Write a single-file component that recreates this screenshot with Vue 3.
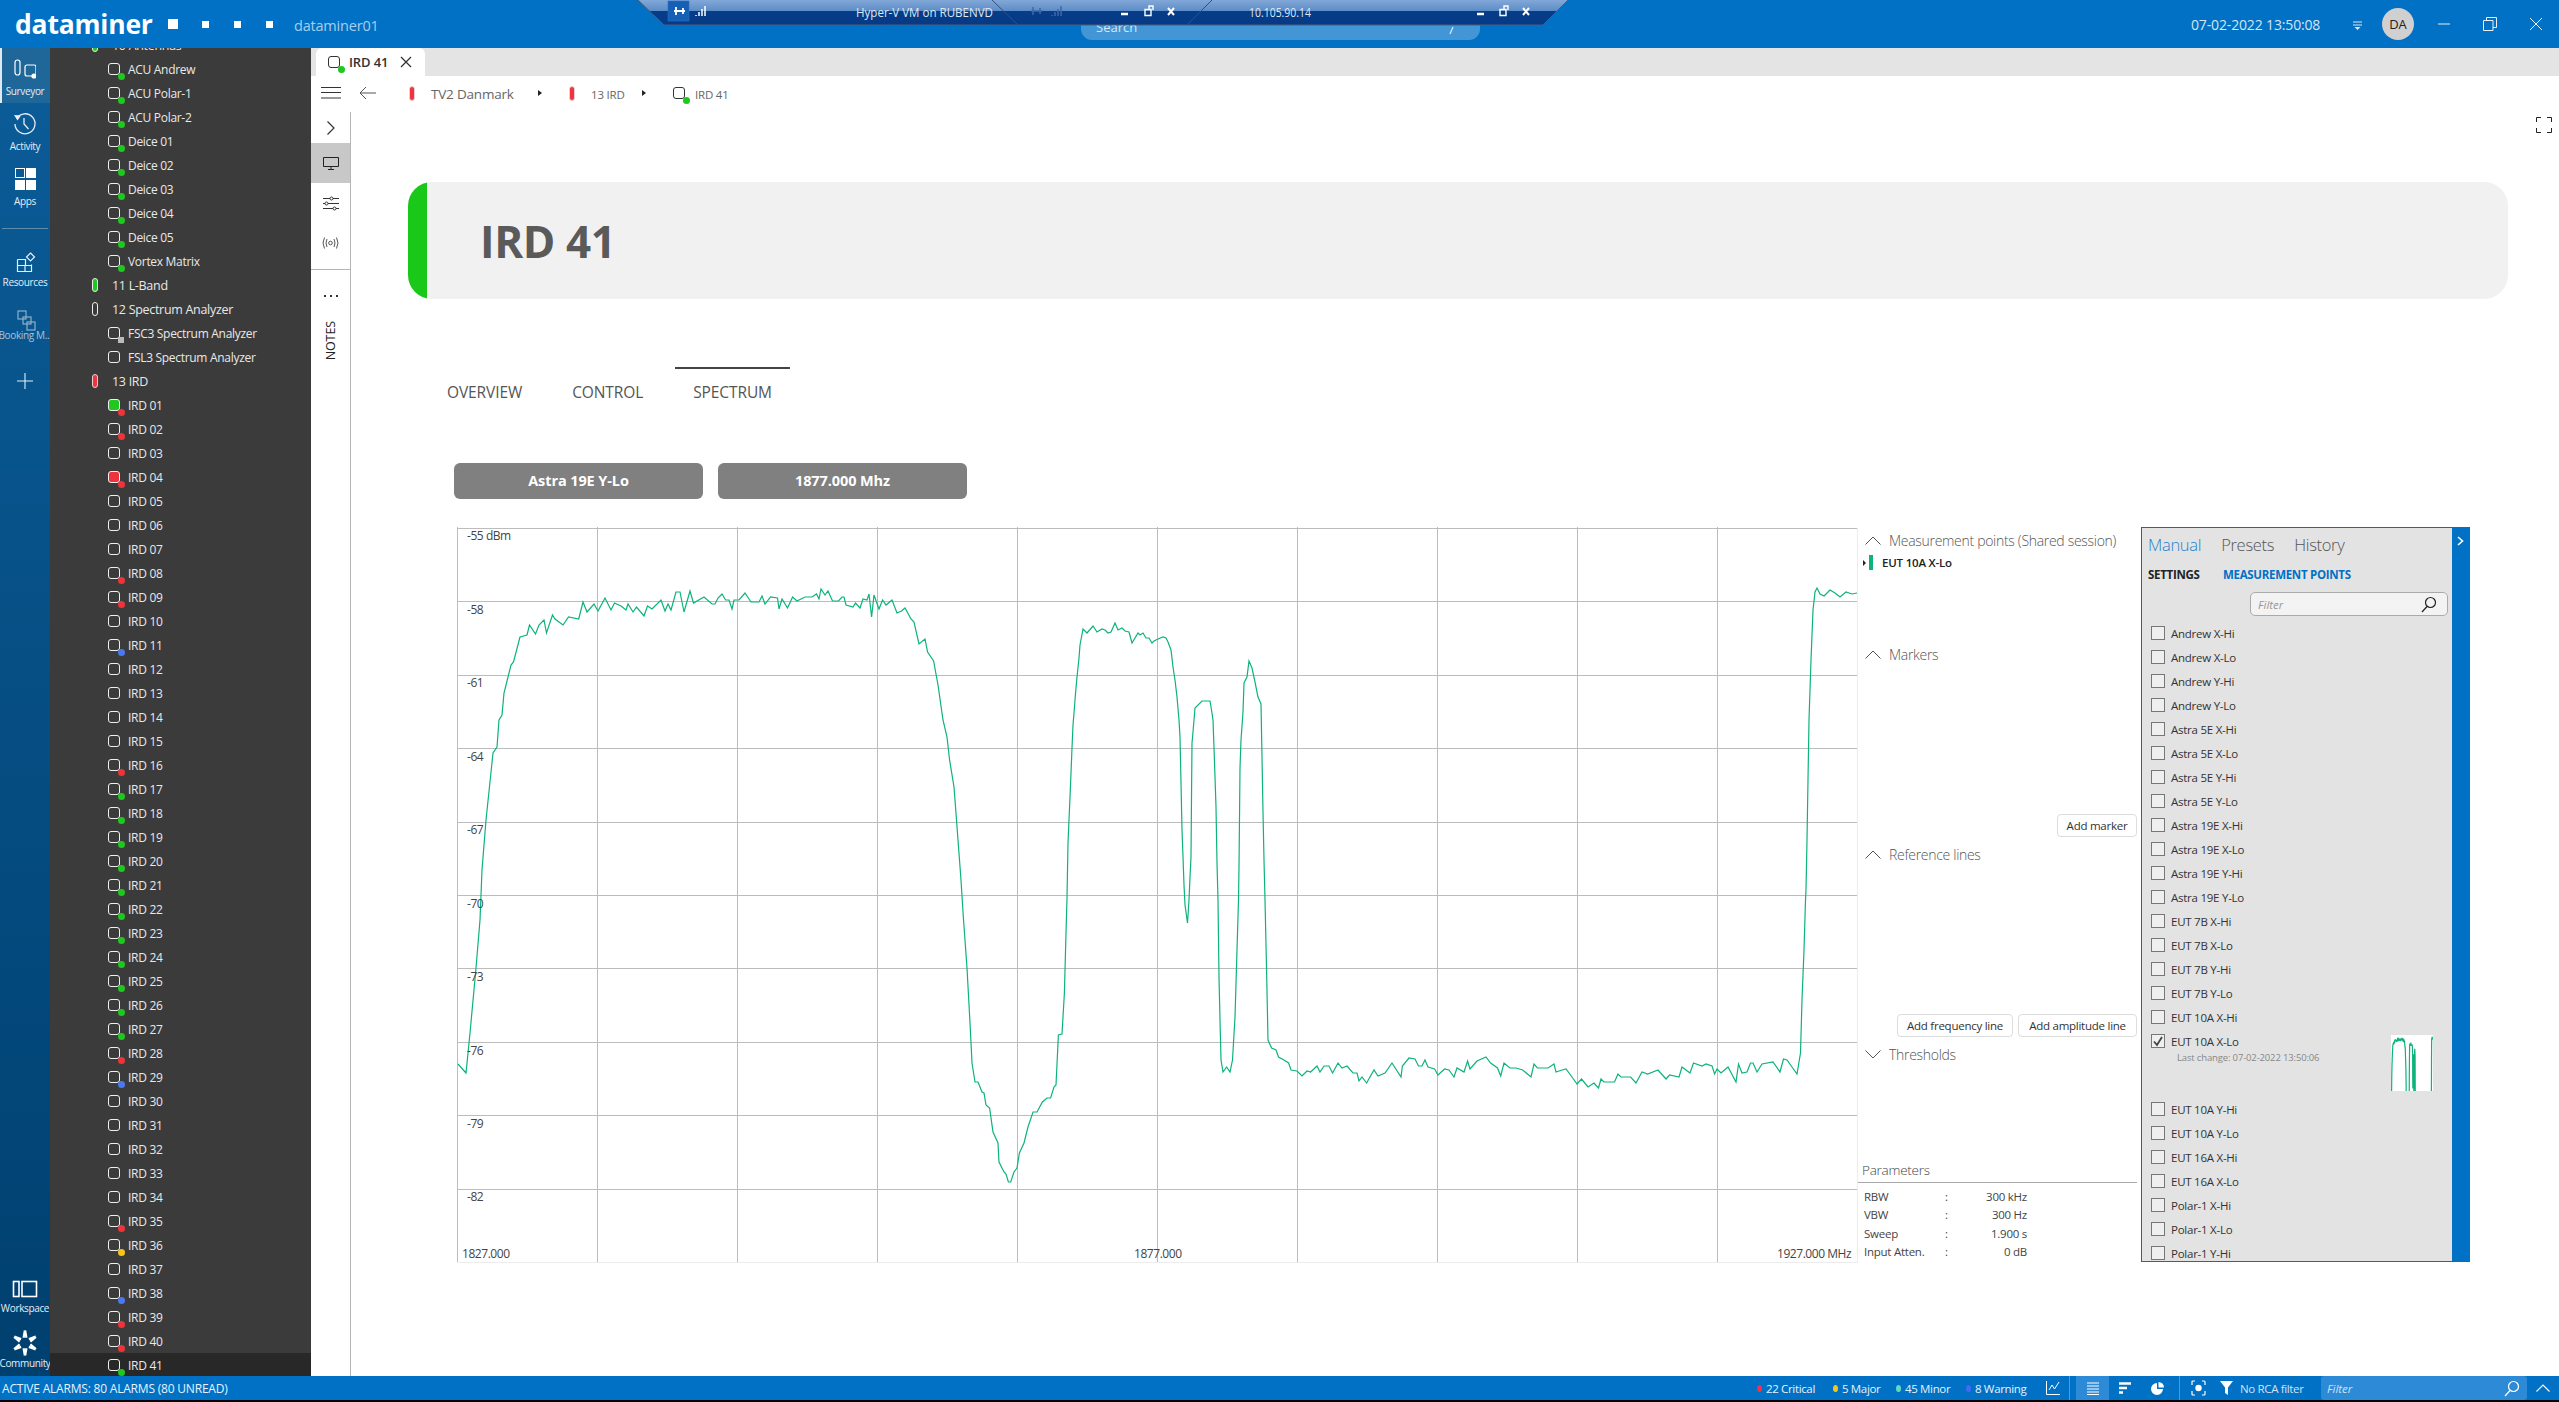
<template>
  <div class="app">
    <header class="top">
      <div class="logo">dataminer</div>
      <span class="sq sq-a"></span><span class="sq sq-b"></span><span class="sq sq-b"></span><span class="sq sq-b"></span>
      <div class="host">dataminer01</div>
      <div class="top-right">
        <div class="date">07-02-2022 13:50:08</div>
        <svg class="drop" width="12" height="12" viewBox="0 0 12 12"><path d="M1 2h9M1 5h9" stroke="#dce8f4" stroke-width="1"/><path d="M2.500 7h6l-3 3z" fill="#dce8f4"/></svg>
        <div class="avatar">DA</div>
        <button class="win"><svg width="14" height="14" viewBox="0 0 14 14"><path d="M1 7h12" stroke="#e8f0f8" stroke-width="1"/></svg></button>
        <button class="win"><svg width="14" height="14" viewBox="0 0 14 14"><path d="M.5 3.500h9.500v10H.5zM3.500 3.500V.5h10v10H10" fill="none" stroke="#e8f0f8" stroke-width="1"/></svg></button>
        <button class="win"><svg width="14" height="14" viewBox="0 0 14 14"><path d="M1 1l12 12M13 1L1 13" stroke="#e8f0f8" stroke-width="1"/></svg></button>
      </div>

      <!-- remote-session bar and search box lying over the title bar -->
      <div class="searchbox"><span>Search</span><svg width="6" height="12" viewBox="0 0 6 12"><path d="M5 3L2 10" stroke="#dcebf8" stroke-width="1.200"/></svg></div>
      <svg class="rdp" width="934" height="28" viewBox="636 0 934 28">
        <defs>
          <linearGradient id="rdpg" x1="0" y1="0" x2="0" y2="1">
            <stop offset="0" stop-color="#82a8d8"/><stop offset=".44" stop-color="#5c8cc6"/>
            <stop offset=".46" stop-color="#063c88"/><stop offset="1" stop-color="#073a86"/>
          </linearGradient>
        </defs>
        <polygon points="638,0 664,25 1543,25 1568,0" fill="url(#rdpg)"/>
        <path d="M638 0L664 25H1543L1568 0" fill="none" stroke="#4e5d74" stroke-width="1"/>
        <path d="M992 0L1018 25M1212 0L1187 25" fill="none" stroke="#36507c" stroke-width="1"/>
        <rect x="668" y="1" width="21" height="20" fill="#1560b4" stroke="#2a72c4" stroke-width=".6"/>
        <path d="M674 11h11M676 7v8M683 8v6" stroke="#fff" stroke-width="1.800" fill="none"/>
        <path d="M696 15v1M699 12v4M702 9v7M705 6v10" stroke="#fff" stroke-width="1.500"/>
        <text x="856" y="17" class="rdp-t" textLength="137" lengthAdjust="spacingAndGlyphs">Hyper-V VM on RUBENVD</text>
        <path d="M1031 11h11M1033 7v8M1040 8v6M1052 15v1M1055 12v4M1058 9v7M1061 6v10" stroke="#3f6aa8" stroke-width="1.500" fill="none"/>
        <path d="M1121 14h7" stroke="#fff" stroke-width="2.500"/>
        <path d="M1145 9.500h6v6h-6zM1149 9V6h4v4" fill="none" stroke="#fff" stroke-width="1.400"/>
        <path d="M1168 8l6 7M1174 8l-6 7" stroke="#fff" stroke-width="2"/>
        <text x="1249" y="17" class="rdp-t" textLength="62" lengthAdjust="spacingAndGlyphs">10.105.90.14</text>
        <path d="M1477 14h7" stroke="#fff" stroke-width="2.500"/>
        <path d="M1500 9.500h6v6h-6zM1504 9V6h4v4" fill="none" stroke="#fff" stroke-width="1.400"/>
        <path d="M1523 8l6 7M1529 8l-6 7" stroke="#fff" stroke-width="2"/>
      </svg>
    </header>

    <div class="body">
      <nav class="rail">
        <div class="ri ri-sel">
          <svg width="24" height="24" viewBox="0 0 24 24"><rect x="3" y="4" width="5" height="15" rx="2.500" fill="none" stroke="#fff" stroke-width="1.200"/><rect x="13" y="9" width="11" height="11" rx="2" fill="none" stroke="#fff" stroke-width="1.200"/><circle cx="22" cy="20" r="2.600" fill="#fff"/></svg>
          <span class="gap4">Surveyor</span>
        </div>
        <div class="ri">
          <svg width="24" height="24" viewBox="0 0 24 24"><path d="M3.500 6.500A10 10 0 1 1 2 12" fill="none" stroke="#e6eef6" stroke-width="1.300"/><path d="M1 3l7 .5-3.500 5z" fill="#e6eef6"/><path d="M11 6v6l4.500 5" fill="none" stroke="#e6eef6" stroke-width="1.300"/></svg>
          <span>Activity</span>
        </div>
        <div class="ri">
          <svg width="24" height="24" viewBox="0 0 24 24"><rect x="2.500" y="1.500" width="9" height="9" fill="none" stroke="#fff" stroke-width="1"/><rect x="13" y="1" width="10" height="10" fill="#fff"/><rect x="2" y="13" width="10" height="10" fill="#fff"/><rect x="13" y="13" width="10" height="10" fill="#fff"/></svg>
          <span>Apps</span>
        </div>
        <div class="rdiv"></div>
        <div class="ri ri-res">
          <svg width="24" height="24" viewBox="0 0 24 24"><path d="M4.500 9.500h8v6h6v-1M4.500 15.500h14v6h-14zM4.500 9.500v6M12 15.500v6" fill="none" stroke="#e6eef6" stroke-width="1.200"/><path d="M17.500 3l4 4-4 4-4-4z" fill="none" stroke="#e6eef6" stroke-width="1.200"/></svg>
          <span>Resources</span>
        </div>
        <div class="ri ri-book">
          <svg width="24" height="24" viewBox="0 0 24 24"><rect x="5" y="3" width="8" height="8" fill="none" stroke="#8fb0c8" stroke-width="1.200"/><rect x="10" y="9" width="8" height="7" fill="none" stroke="#8fb0c8" stroke-width="1.200"/><rect x="14" y="14" width="8" height="8" fill="none" stroke="#8fb0c8" stroke-width="1.200"/></svg>
          <span>Booking M...</span>
        </div>
        <div class="ri ri-plus">
          <svg width="24" height="24" viewBox="0 0 24 24"><path d="M12 4v16M4 12h16" stroke="#e6eef6" stroke-width="1.100"/></svg>
        </div>
        <div class="rspace"></div>
        <div class="ri ri-ws">
          <svg width="26" height="24" viewBox="0 0 26 24"><rect x="1.500" y="4.500" width="5.500" height="15" fill="none" stroke="#fff" stroke-width="1.600"/><rect x="10" y="4.500" width="14.500" height="15" fill="none" stroke="#fff" stroke-width="1.600"/></svg>
          <span class="gap0">Workspace</span>
        </div>
        <div class="ri ri-com">
          <svg width="26" height="26" viewBox="-13 -13 26 26"><path :d="burst" fill="none" stroke="#fff" stroke-width="2.200"/></svg>
          <span class="gap0">Community</span>
        </div>
      </nav>

      <aside class="tree">
        <div class="tree-in">
          <div v-for="r in rows" :key="r.label" class="row" :class="{ 'row-sel': r.label === 'IRD 41' }">
            <template v-if="r.group">
              <span class="pill" :class="r.group"></span>
              <span class="gt">{{ r.label }}</span>
            </template>
            <template v-else>
              <span class="el" :class="r.fill"><i v-if="r.dot" :class="r.dot"></i></span>
              <span class="et">{{ r.label }}</span>
            </template>
          </div>
        </div>
      </aside>

      <main class="main">
        <div class="tabbar">
          <div class="tab">
            <span class="el el-dark el-tab"><i class="green"></i></span>
            <b>IRD 41</b>
            <svg width="12" height="12" viewBox="0 0 12 12"><path d="M1 1l10 10M11 1L1 11" stroke="#333" stroke-width="1.300"/></svg>
          </div>
        </div>
        <div class="navrow">
          <svg class="hamb" width="20" height="12" viewBox="0 0 20 12"><path d="M0 .5h20M0 5.500h20M0 11h20" stroke="#333" stroke-width="1"/></svg>
          <svg class="back" width="17" height="14" viewBox="0 0 17 14"><path d="M17 7H1M7 1L1 7l6 6" fill="none" stroke="#555" stroke-width="1"/></svg>
          <span class="pill red crumb-p1"></span><span class="c1">TV2 Danmark</span>
          <span class="caret c-a"></span>
          <span class="pill red crumb-p2"></span><span class="c2">13 IRD</span>
          <span class="caret c-b"></span>
          <span class="el el-dark crumb-el"><i class="green"></i></span><span class="c3">IRD 41</span>
        </div>
        <div class="work">
          <div class="strip">
            <div class="st st-chev"><svg width="10" height="16" viewBox="0 0 10 16"><path d="M1.500 1.500L8 8l-6.500 6.500" fill="none" stroke="#333" stroke-width="1.200"/></svg></div>
            <div class="st st-sel"><svg width="16" height="13" viewBox="0 0 16 13"><path d="M.5.500h15v9H.5zM8 9.500v3M5 12.500h6" fill="none" stroke="#222" stroke-width="1"/></svg></div>
            <div class="st"><svg width="16" height="15" viewBox="0 0 16 15"><path d="M0 2.500h7M10 2.500h6M0 7.500h2M5 7.500h11M0 12.500h10M13 12.500h3" stroke="#333" stroke-width="1"/><circle cx="8.500" cy="2.500" r="1.500" fill="none" stroke="#333"/><circle cx="3.500" cy="7.500" r="1.500" fill="none" stroke="#333"/><circle cx="11.500" cy="12.500" r="1.500" fill="none" stroke="#333"/></svg></div>
            <div class="st st-wave"><svg width="17" height="12" viewBox="0 0 17 12"><circle cx="8.500" cy="6" r="1.800" fill="none" stroke="#555"/><path d="M5 2Q3 6 5 10M12 2Q14 6 12 10M2.500 .5Q-.5 6 2.500 11.500M14.500 .5Q17.500 6 14.500 11.500" fill="none" stroke="#555"/></svg></div>
            <div class="st-line"></div>
            <div class="dots"><i></i><i></i><i></i></div>
            <div class="notes">NOTES</div>
          </div>

          <div class="content">
            <svg class="fs" width="16" height="16" viewBox="0 0 16 16"><path d="M.5 5V.5H5M11 .5h4.500V5M.5 11v4.500H5M11 15.500h4.500V11" fill="none" stroke="#222" stroke-width="1"/></svg>

            <section class="card">
              <div class="card-bar"></div>
              <h1>IRD 41</h1>
            </section>

            <div class="tabs">
              <div class="t">OVERVIEW</div>
              <div class="t">CONTROL</div>
              <div class="t t-on">SPECTRUM</div>
            </div>

            <div class="badges">
              <div class="badge">Astra 19E Y-Lo</div>
              <div class="badge">1877.000 Mhz</div>
            </div>

            <div class="chartrow">
              <svg class="chart" width="1401" height="736" viewBox="457 527 1401 736">
                <path :d="gridH" stroke="#bcbcbc" stroke-width="1" fill="none"/>
                <path :d="gridV" stroke="#bcbcbc" stroke-width="1" fill="none"/>
                <path d="M457.500 1262.500H1857.500V528" stroke="#ececec" stroke-width="1" fill="none"/>
                <polyline :points="trace" fill="none" stroke="#0cb37b" stroke-width="1.200"/>
                <text v-for="l in yLabels" :key="l.t" x="467" :y="l.y" class="cl">{{ l.t }}</text>
                <text x="462" y="1258" class="cl">1827.000</text>
                <text x="1134" y="1258" class="cl">1877.000</text>
                <text x="1777" y="1258" class="cl">1927.000 MHz</text>
              </svg>

              <div class="side">
                <div class="sec sec-mp">
                  <div class="sh"><svg width="16" height="9" viewBox="0 0 16 9"><path d="M.5 8.500L8 1l7.500 7.500" fill="none" stroke="#555"/></svg><span>Measurement points (Shared session)</span></div>
                  <div class="mp"><span class="mp-car"></span><span class="mp-bar"></span><b>EUT 10A X-Lo</b></div>
                </div>
                <div class="sec sec-m">
                  <div class="sh"><svg width="16" height="9" viewBox="0 0 16 9"><path d="M.5 8.500L8 1l7.500 7.500" fill="none" stroke="#555"/></svg><span>Markers</span></div>
                  <div class="btns"><button>Add marker</button></div>
                </div>
                <div class="sec sec-m">
                  <div class="sh"><svg width="16" height="9" viewBox="0 0 16 9"><path d="M.5 8.500L8 1l7.500 7.500" fill="none" stroke="#555"/></svg><span>Reference lines</span></div>
                  <div class="btns"><button class="b-f">Add frequency line</button><button class="b-a">Add amplitude line</button></div>
                </div>
                <div class="sec sec-t">
                  <div class="sh"><svg width="16" height="9" viewBox="0 0 16 9"><path d="M.5.500L8 8l7.500-7.500" fill="none" stroke="#555"/></svg><span>Thresholds</span></div>
                </div>
                <div class="params">
                  <div class="ph">Parameters</div>
                  <div v-for="p in params" :key="p[0]" class="pr"><span class="pk">{{ p[0] }}</span><span class="pc">:</span><span class="pv">{{ p[1] }}</span></div>
                </div>
              </div>

              <div class="panel">
                <div class="pgray">
                  <div class="ptabs"><span class="on">Manual</span><span>Presets</span><span>History</span></div>
                  <div class="psub"><b>SETTINGS</b><b class="blue">MEASUREMENT POINTS</b></div>
                  <div class="pfilter"><em>Filter</em><svg width="16" height="17" viewBox="0 0 16 17"><circle cx="9.500" cy="6.500" r="5" fill="none" stroke="#222" stroke-width="1.200"/><path d="M6 10.500L1 16" stroke="#222" stroke-width="1.200"/></svg></div>
                  <div class="plist">
                    <div v-for="m in points" :key="m" class="pi" :class="{ 'pi-x': m === checked }">
                      <div class="pi-r">
                        <span class="cb"><svg v-if="m === checked" width="12" height="12" viewBox="0 0 12 12"><path d="M2 6.500L5 10l5-8" fill="none" stroke="#444" stroke-width="1.800"/></svg></span>
                        <span>{{ m }}</span>
                      </div>
                      <template v-if="m === checked">
                        <div class="lastc">Last change: 07-02-2022 13:50:06</div>
                        <svg class="thumb" width="42" height="56" viewBox="458 570 1400 370" preserveAspectRatio="none"><polyline :points="trace" fill="none" stroke="#0cb37b" stroke-width="1.200" vector-effect="non-scaling-stroke"/></svg>
                      </template>
                    </div>
                  </div>
                </div>
                <div class="pblue"><svg width="7" height="10" viewBox="0 0 7 10"><path d="M1 1l4.500 4L1 9" fill="none" stroke="#fff" stroke-width="1.600"/></svg></div>
              </div>
            </div>
          </div>
        </div>
      </main>
    </div>

    <footer class="foot">
      <div class="al-txt">ACTIVE ALARMS: 80 ALARMS (80 UNREAD)</div>
      <div class="foot-r">
        <div class="al w76"><i class="f-red"></i>22 Critical</div>
        <div class="al w63"><i class="f-yel"></i>5 Major</div>
        <div class="al w70"><i class="f-min"></i>45 Minor</div>
        <div class="al w75"><i class="f-blu"></i>8 Warning</div>
        <div class="fi w28"><svg width="14" height="14" viewBox="0 0 14 14"><path d="M.5 0v13.500H14M3 9l3-5 2.500 4L13 1" fill="none" stroke="#fff"/></svg></div>
        <div class="fdiv"></div>
        <div class="fi w33 f-on"><svg width="12" height="13" viewBox="0 0 12 13"><path d="M0 1h12M0 4h12M0 7h12M0 10h12" stroke="#fff" stroke-width="1.200"/><path d="M0 12.500h12" stroke="#fff"/></svg></div>
        <div class="fi w32"><svg width="12" height="12" viewBox="0 0 12 12"><path d="M0 1.500h12M0 6h8M0 10.500h4" stroke="#fff" stroke-width="2.400"/></svg></div>
        <div class="fi w32"><svg width="13" height="13" viewBox="0 0 13 13"><path d="M6 1a6 6 0 1 0 6 6H6z" fill="#fff"/><path d="M7.500 0a5.500 5.500 0 0 1 5.500 5.500H7.500z" fill="#fff"/></svg></div>
        <div class="fdiv2"></div>
        <div class="fi w32"><svg width="15" height="16" viewBox="0 0 15 16"><path d="M4 1H2Q1 1 1 2V5M11 1h2q1 0 1 1v3M4 15H2q-1 0-1-1v-3M11 15h2q1 0 1-1v-3" fill="none" stroke="#fff" stroke-width="1.200"/><circle cx="7.500" cy="8" r="3.200" fill="#fff"/></svg></div>
        <div class="fi w25"><svg width="13" height="14" viewBox="0 0 13 14"><path d="M0 0h13L8 6.500V14L5 12V6.500z" fill="#fff"/></svg></div>
        <div class="rca">No RCA filter</div>
        <div class="ffilter"><em>Filter</em><svg width="16" height="17" viewBox="0 0 16 17"><circle cx="9.500" cy="6.500" r="5" fill="none" stroke="#fff" stroke-width="1.200"/><path d="M6 10.500L1 16" stroke="#fff" stroke-width="1.200"/></svg></div>
        <div class="fi w32"><svg width="14" height="8" viewBox="0 0 14 8"><path d="M.5 7.500L7 1l6.500 6.500" fill="none" stroke="#fff" stroke-width="1.100"/></svg></div>
      </div>
    </footer>
  </div>
</template>

<script setup>
const burst = Array.from({ length: 12 }, (_, i) => {
  const a = ((i * 30 + 15) * Math.PI) / 180
  const b = a + (i % 2 ? 0.25 : -0.25)
  const p = (r, t) => `${(r * Math.sin(t)).toFixed(2)} ${(-r * Math.cos(t)).toFixed(2)}`
  return `M${p(5.5, a)}L${p(12.5, b)}`
}).join('')

const gridH = Array.from({ length: 10 }, (_, i) => `M457 ${Math.round(528 + 73.4 * i) + 0.5}H1857`).join('')
const gridV = Array.from({ length: 10 }, (_, i) => `M${457.5 + 140 * i} 527V1262`).join('')
const yLabels = [['-55 dBm', 540], ['-58', 614], ['-61', 687], ['-64', 761], ['-67', 834], ['-70', 908], ['-73', 981], ['-76', 1055], ['-79', 1128], ['-82', 1201]].map(([t, y]) => ({ t, y }))

const raw = [458,1064,466,1073,470,1033,476,968,480,920,482,870,486,820,490.5,777,493,753,497,747,499,720,502,715,504,693,509,673,511,665,513.5,662,520,637,527,635,529.5,625,535.5,634,539,625,544,620,546.5,633,552.5,615,555,619,563,625,568.5,617,578.7,619,583,602,587,612,594,604,598,611,605,598,611,610,614.5,603,621,606,626,610,628,604,633,612,636.5,607,644,616,647.5,606,652,609,661,600,665,611,668,604,671,610,676,592,680,592,684,612,690,591,693.500,603,704,597,712,604,715,604,718,598,722,594,725.600,600,729,600,732,609,734,600,739,600,745,593,751,602,759,602,762,596,765,604,770.600,597,777.500,598,779,609,782,599,787.500,608,792.600,597,797,601,805,597,812,597,816.500,594,819,599,821,589,825,595,828,591,832.500,601,838.500,601,842,597,844,597,846,605,853,607,855.500,603,860,608,863,599,867,600,869,594,871.600,617,874,595,879,609,882.600,600,886,605,892,600,897,613,901.500,611,905,608,911,619,914,622,919,644,925,639,927.600,652,933.600,661,938,685,943,720,947,737,949.600,760,954,787,956.500,820,961,880,963.400,918,967,968,970,1023,972,1063,975,1082,978,1082,982,1092,984,1093,986,1105,989.600,1108,993,1132,998,1143,999,1162,1004,1172,1006,1174,1008.400,1182,1010.700,1182,1014,1172,1017,1168,1019.400,1153,1024,1143,1028,1127,1033,1112,1037,1112,1042.400,1102,1047,1098,1050.600,1098,1054,1087,1056,1085,1058.400,1035,1062,1034,1064.400,993,1066,933,1067,898,1068,843,1070,797,1071,773,1072,748,1073,725,1074,713,1075,700,1076,688,1077,677,1079,658,1080,645,1083,629,1087,633,1093,626,1097,632,1102,629,1105,630,1108,633,1111,632,1115,623,1118,630,1122,628,1125,631,1129,632,1132,643,1138,633,1140,635,1143,633,1146,638,1149,638,1152,643,1154,641,1158,639,1163,637,1166,638,1168,642,1171,650,1173,667,1175,680,1177,697,1179,720,1180,737,1181,783,1182,830,1183,857,1184,885,1185,905,1187.500,923,1189,900,1190,877,1191,857,1191.500,798,1192,743,1193,732,1195,708,1202,701,1210,701,1212,713,1213,720,1214,748,1215,777,1216,807,1217,863,1218,900,1219,978,1220,1020,1221,1060,1223,1072,1226.600,1067,1230,1072,1232.500,1060,1235,1017,1237,950,1238.500,900,1239,867,1239.500,818,1240,768,1241,740,1243,712,1244,683,1247,677,1249,661,1252,668,1255,682,1258,697,1261,704,1262,757,1263,812,1264,860,1265,900,1266.500,967,1268,1040,1271.600,1048,1276,1050,1278.500,1057,1284,1060,1288.600,1063,1291,1070,1297,1071,1302,1076,1307,1071,1310.600,1072,1317,1066,1320,1072,1324,1066,1329,1066,1332.600,1073,1338,1063,1342,1068,1347,1066,1353,1073,1357,1073,1359,1081,1362,1077,1366.600,1083,1374,1070,1378,1076,1385,1073,1392,1063,1401,1077,1402.400,1066,1409,1058,1415,1059,1418.500,1066,1422,1066,1425,1060,1428,1067,1434.600,1069,1438,1075,1444.600,1069,1449,1070,1454,1077,1457,1068,1464,1072,1467.600,1061,1470,1069,1477,1061,1486,1057,1490.600,1063,1497.500,1068,1500.700,1076,1504,1063,1510,1068,1516,1068,1522.700,1070,1531,1077,1534,1064,1537.400,1068,1548,1068,1554,1064,1556,1072,1562,1070,1566,1069,1572,1077,1577,1084,1581.500,1079,1588,1087,1594,1083,1598.500,1088,1601,1079,1604,1082,1614.500,1082,1618,1074,1621,1077,1630.600,1077,1636,1083,1642,1072,1647.600,1074,1658,1070,1666,1079,1669.600,1075,1679,1077,1682,1067,1690,1073,1693.500,1063,1702,1066,1706,1064,1712,1066,1714.600,1074,1717,1069,1721,1073,1728,1067,1736,1082,1738.500,1064,1742,1073,1747,1072,1750.500,1063,1753,1063,1757,1072,1762,1064,1773,1062,1780,1072,1783.500,1059,1787,1060,1792.700,1068,1797,1074,1800.500,1053,1802,1000,1804,950,1805.500,900,1806,890,1807,840,1808,780,1809,720,1811,660,1813,610,1815,592,1817,588,1820,594,1824,596,1830,590,1835,593,1840,597,1846,592,1852,594,1857,593]
const trace = raw.reduce((s, v, i) => s + (i % 2 ? ',' : ' ') + v, '').trim()

const E = (label, dot = '', fill = '') => ({ label, dot, fill })
const G = (label, group) => ({ label, group })
const ird = { 1: ['red', 'f-green'], 2: ['red'], 4: ['red', 'f-red'], 8: ['red'], 9: ['red'], 11: ['blue'], 16: ['red'], 28: ['red'], 29: ['blue'], 35: ['red'], 36: ['yellow'], 38: ['blue'], 39: ['red'], 40: ['red'], 41: ['green'] }
for (let n = 17; n <= 27; n++) ird[n] = ['green']
const rows = [
  G('10 Antennas', 'green'),
  ...['ACU Andrew', 'ACU Polar-1', 'ACU Polar-2', 'Deice 01', 'Deice 02', 'Deice 03', 'Deice 04', 'Deice 05', 'Vortex Matrix'].map((l) => E(l, 'green')),
  G('11 L-Band', 'green'),
  G('12 Spectrum Analyzer', 'hollow'),
  E('FSC3 Spectrum Analyzer', 'gray'),
  E('FSL3 Spectrum Analyzer'),
  G('13 IRD', 'red'),
  ...Array.from({ length: 41 }, (_, i) => {
    const n = i + 1
    const s = ird[n] || []
    return E('IRD ' + String(n).padStart(2, '0'), s[0], s[1])
  })
]

const params = [['RBW', '300 kHz'], ['VBW', '300 Hz'], ['Sweep', '1.900 s'], ['Input Atten.', '0 dB']]
const checked = 'EUT 10A X-Lo'
const points = ['Andrew X-Hi', 'Andrew X-Lo', 'Andrew Y-Hi', 'Andrew Y-Lo', 'Astra 5E X-Hi', 'Astra 5E X-Lo', 'Astra 5E Y-Hi', 'Astra 5E Y-Lo', 'Astra 19E X-Hi', 'Astra 19E X-Lo', 'Astra 19E Y-Hi', 'Astra 19E Y-Lo', 'EUT 7B X-Hi', 'EUT 7B X-Lo', 'EUT 7B Y-Hi', 'EUT 7B Y-Lo', 'EUT 10A X-Hi', 'EUT 10A X-Lo', 'EUT 10A Y-Hi', 'EUT 10A Y-Lo', 'EUT 16A X-Hi', 'EUT 16A X-Lo', 'Polar-1 X-Hi', 'Polar-1 X-Lo', 'Polar-1 Y-Hi']
</script>

<style>
html, body { margin: 0; background: #000; }
</style>

<style scoped>
.app { width: 2559px; height: 1402px; display: flex; flex-direction: column; overflow: hidden; background: #000; font-family: "Open Sans", "Liberation Sans", sans-serif; }
button { font: inherit; }

/* title bar */
.top { height: 48px; flex: none; display: flex; align-items: center; background: #0071c5; position: relative; color: #fff; }
.logo { margin-left: 15px; width: 131px; font-size: 26.500px; font-weight: 700; letter-spacing: -.2px; line-height: 48px; color: #fff; }
.sq { background: #fff; display: block; }
.sq-a { width: 10px; height: 10px; margin-left: 22px; }
.sq-b { width: 7px; height: 7px; margin-left: 25px; }
.sq-a + .sq-b { margin-left: 24px; }
.host { margin-left: 21px; font-size: 14.500px; letter-spacing: -.2px; color: #a8cdec; padding-top: 2px; }
.top-right { margin-left: auto; display: flex; align-items: center; }
.date { width: 146px; font-size: 14px; letter-spacing: -.15px; color: #d6e4f0; white-space: nowrap; padding-top: 1px; }
.drop { margin-left: 15px; margin-top: 3px; }
.avatar { width: 32px; height: 32px; border-radius: 50%; background: #d0d0d0; color: #222; font-size: 13px; line-height: 32px; text-align: center; margin-left: 18px; }
.win { width: 46px; height: 48px; padding: 0; background: none; border: 0; display: flex; align-items: center; justify-content: center; }
.avatar + .win { margin-left: 7px; }
.searchbox { position: absolute; left: 1081px; top: 0; width: 399px; height: 40px; box-sizing: border-box; background: #4396d6; border-radius: 0 0 11px 11px; display: flex; align-items: flex-end; justify-content: space-between; padding: 0 26px 4px 15px; color: #d5e6f5; font-size: 13px; }
.rdp { position: absolute; left: 636px; top: 0; }
.rdp-t { font-size: 12px; fill: #dfe8f4; font-family: "Open Sans", sans-serif; }

/* body */
.body { height: 1328px; flex: none; display: flex; }
.rail { width: 50px; flex: none; display: flex; flex-direction: column; background: linear-gradient(#0b5c98, #00406f); color: #e4edf5; }
.ri { display: flex; flex-direction: column; align-items: center; height: 55px; box-sizing: border-box; padding-top: 9px; }
.ri svg { flex: none; display: block; }
.ri span { display: block; height: 14px; line-height: 14px; font-size: 10px; letter-spacing: -.35px; margin-top: 3px; white-space: nowrap; }
.ri-sel { background: #1f6699; border-left: 2px solid #dfe9f2; padding-top: 8px; padding-right: 2px; }
.ri-sel svg { margin-left: -2px; }
.ri-sel .gap4 { margin-top: 4px; }
.rdiv { height: 1px; margin: 15px 2px 0; background: #5e8cad; flex: none; }
.ri-res { height: 62px; padding-top: 21px; }
.ri-res span { margin-top: 1px; }
.ri-book { height: 60px; padding-top: 17px; color: #a9c2d5; }
.ri-book span { margin-top: -4px; }
.ri-plus { height: 40px; padding-top: 18px; }
.rspace { flex: 1; }
.ri-ws { height: 38px; padding: 0; }
.ri-com { height: 47px; padding: 15px 0 0; margin-bottom: 6px; box-sizing: content-box; height: 40px; }
.ri .gap0 { margin-top: 0; }

.tree { width: 261px; flex: none; background: #3b3b3b; overflow: hidden; color: #e9e9e9; font-size: 12px; }
.tree-in { margin-top: -15px; }
.row { height: 24px; display: flex; align-items: center; box-sizing: border-box; padding-left: 42px; position: relative; white-space: nowrap; letter-spacing: -.3px; }
.row-sel { background: #282828; }
.pill { display: block; width: 6px; height: 14px; border-radius: 3px; box-sizing: border-box; border: 1.200px solid #eee; flex: none; }
.pill.green { background: #1ec81e; }
.pill.red { background: #ef3341; border-color: #e8d0d0; }
.gt { margin-left: 14px; font-size: 12.500px; }
.el { display: block; flex: none; width: 12px; height: 12px; box-sizing: border-box; border: 1.200px solid #efefef; border-radius: 3px; position: relative; margin: -1px 0 0 16px; }
.el i { position: absolute; right: -6px; bottom: -6px; width: 7px; height: 7px; border-radius: 50%; display: block; }
.el i.green { background: #1ec81e; }
.el i.red { background: #f0323c; }
.el i.blue { background: #4a78f0; }
.el i.yellow { background: #f5c518; }
.el i.gray { background: #bbb; border-radius: 0; width: 6px; height: 6px; right: -5px; bottom: -5px; }
.el.f-green { background: #1ec81e; }
.el.f-red { background: #f0323c; }
.et { margin-left: 8px; }
.el-dark { border-color: #333; margin: 0; }

/* main */
.main { flex: 1; min-width: 0; display: flex; flex-direction: column; background: #fff; }
.tabbar { height: 28px; flex: none; background: #e4e4e4; padding-left: 5px; display: flex; }
.tab { width: 109px; height: 28px; box-sizing: border-box; background: #fff; border-radius: 6px 6px 0 0; display: flex; align-items: center; padding-left: 12px; color: #333; }
.tab b { margin-left: 9px; width: 51px; font-size: 13px; font-weight: 600; letter-spacing: -.1px; white-space: nowrap; }
.el-tab { margin-top: -1px; }
.tab svg { margin-left: 0; }
.navrow { height: 36px; flex: none; display: flex; align-items: center; color: #666; white-space: nowrap; }
.hamb { margin-left: 10px; margin-top: -2px; }
.back { margin-left: 18px; margin-top: -2px; }
.crumb-p1 { margin-left: 33px; border-color: #f6c0c0; height: 15px; margin-top: -2px; }
.c1 { margin-left: 16px; width: 84px; font-size: 13.500px; letter-spacing: -.2px; }
.caret { display: block; width: 0; height: 0; border-left: 4px solid #222; border-top: 3.500px solid transparent; border-bottom: 3.500px solid transparent; margin-top: -2px; }
.c-a { margin-left: 23px; }
.crumb-p2 { margin-left: 27px; border-color: #f6c0c0; height: 15px; margin-top: -2px; }
.c2 { margin-left: 16px; width: 36px; font-size: 11.500px; letter-spacing: -.2px; }
.c-b { margin-left: 15px; }
.crumb-el { margin-left: 27px; margin-top: -2px; }
.c3 { margin-left: 10px; font-size: 11.500px; letter-spacing: -.2px; }

.work { flex: 1; min-height: 0; display: flex; }
.strip { width: 40px; flex: none; box-sizing: border-box; border-right: 1.500px solid #b5b5b5; display: flex; flex-direction: column; align-items: stretch; }
.st { height: 40px; display: flex; align-items: center; justify-content: center; flex: none; }
.st-chev { height: 31px; }
.st-sel { background: #c8c8c8; }
.st-wave { height: 40px; }
.st-line { height: 1px; background: #b5b5b5; margin-top: 6px; flex: none; }
.dots { display: flex; justify-content: center; gap: 4px; margin-top: 25px; }
.dots i { width: 2px; height: 2px; background: #333; display: block; }
.notes { writing-mode: vertical-rl; transform: rotate(180deg); font-size: 12.500px; letter-spacing: -.1px; color: #222; align-self: center; margin-top: 24px; line-height: 16px; }

.content { flex: 1; min-width: 0; position: relative; padding: 70px 0 0 57px; }
.fs { position: absolute; right: 7px; top: 5px; }
.card { width: 2100px; height: 117px; background: #f1f1f1; border-radius: 24px; overflow: hidden; display: flex; align-items: center; }
.card-bar { width: 19px; height: 100%; background: #19c819; flex: none; }
.card h1 { margin: 0 0 0 53px; font-size: 44px; font-weight: 700; letter-spacing: -.4px; color: #5a5a5a; }
.tabs { display: flex; gap: 14px; margin: 68px 0 0 21px; height: 50px; color: #555; font-size: 15.500px; }
.t { padding: 0 18px; line-height: 46px; border-top: 2.500px solid transparent; letter-spacing: -.1px; }
.t-on { border-top-color: #444; }
.badges { display: flex; gap: 15px; margin: 46px 0 0 46px; }
.badge { width: 249px; height: 36px; line-height: 36px; text-align: center; border-radius: 6px; background: #808080; color: #fff; font-size: 14.500px; font-weight: 700; letter-spacing: -.1px; }
.chartrow { display: flex; margin: 28px 0 0 49px; height: 736px; }
.chart { flex: none; display: block; }
.cl { font-size: 12px; fill: #444; letter-spacing: -.45px; font-family: "Open Sans", sans-serif; }

.side { width: 279px; flex: none; display: flex; flex-direction: column; margin-right: 4px; color: #666; }
.sec { display: flex; flex-direction: column; flex: none; }
.sec-mp { height: 114px; }
.sec-m { height: 200px; }
.sec-t { height: 116px; }
.sh { height: 27px; display: flex; align-items: center; padding-left: 7px; flex: none; }
.sh span { margin-left: 8px; font-size: 14px; font-weight: 300; letter-spacing: -.3px; white-space: nowrap; color: #555; }
.mp { display: flex; align-items: center; height: 15px; margin-top: 1px; padding-left: 5px; color: #222; }
.mp-car { width: 0; height: 0; border-left: 3px solid #222; border-top: 3px solid transparent; border-bottom: 3px solid transparent; }
.mp-bar { width: 4px; height: 15px; background: #0cb37b; margin-left: 3px; }
.mp b { margin-left: 9px; font-size: 11.500px; font-weight: 600; letter-spacing: -.2px; white-space: nowrap; }
.btns { margin-top: auto; margin-bottom: 4px; display: flex; justify-content: flex-end; gap: 5px; }
.btns button { height: 23px; width: 80px; padding: 0; background: #fff; border: 1px solid #ddd; border-radius: 4px; color: #333; font-size: 11.500px; letter-spacing: -.25px; white-space: nowrap; }
.btns .b-f { width: 116px; }
.btns .b-a { width: 119px; }
.params { color: #444; font-size: 11.500px; letter-spacing: -.25px; }
.ph { height: 26px; line-height: 26px; padding-left: 4px; font-size: 13.500px; font-weight: 300; color: #444; border-bottom: 1px solid #aaa; box-sizing: border-box; margin-bottom: 5px; }
.pr { display: flex; height: 18.300px; line-height: 18px; padding-left: 6px; }
.pk { width: 81px; white-space: nowrap; }
.pc { width: 20px; }
.pv { width: 62px; text-align: right; }

.panel { width: 329px; height: 735px; flex: none; box-sizing: border-box; border: 1.500px solid #0071c5; display: flex; overflow: hidden; }
.pgray { flex: 1; min-width: 0; background: #e3e3e3; padding-left: 6px; color: #444; }
.pblue { width: 17px; flex: none; background: #0071c5; display: flex; justify-content: center; padding-top: 8px; box-sizing: border-box; }
.pblue svg { display: block; }
.ptabs { display: flex; height: 30px; align-items: center; padding-top: 1px; font-size: 16.500px; font-weight: 300; letter-spacing: -.3px; color: #555; }
.ptabs span { margin-right: 20px; }
.ptabs .on { color: #1d82cc; }
.psub { display: flex; height: 30px; align-items: center; font-size: 11.500px; letter-spacing: -.3px; color: #222; }
.psub b { width: 75px; font-weight: 700; white-space: nowrap; }
.psub .blue { color: #0071c5; }
.pfilter { margin: 3px 0 5px 102px; width: 198px; height: 24px; box-sizing: border-box; border: 1px solid #aaa; border-radius: 5px; background: #f3f3f3; display: flex; align-items: center; justify-content: space-between; padding: 0 10px 0 7px; }
.pfilter em { font-size: 11.500px; color: #999; }
.plist { font-size: 11.500px; letter-spacing: -.25px; color: #333; }
.pi { height: 24px; position: relative; flex: none; }
.pi-x { height: 68px; }
.pi-r { height: 24px; display: flex; align-items: center; padding-left: 3px; white-space: nowrap; }
.cb { width: 14px; height: 14px; box-sizing: border-box; border: 1px solid #777; background: #efefef; margin-right: 6px; flex: none; display: flex; align-items: center; justify-content: center; }
.lastc { position: absolute; left: 29px; top: 21px; line-height: 16px; white-space: nowrap; font-size: 9.500px; color: #888; letter-spacing: -.15px; }
.thumb { position: absolute; left: 243px; top: 6px; background: #fff; display: block; }

/* status bar */
.foot { height: 24px; flex: none; background: #0071c5; display: flex; align-items: center; color: #e8f1fa; font-size: 12px; margin-bottom: 2px; white-space: nowrap; }
.al-txt { padding-left: 2px; letter-spacing: -.2px; }
.foot-r { margin-left: auto; display: flex; align-items: center; height: 24px; }
.al { display: flex; align-items: center; gap: 4px; letter-spacing: -.35px; font-size: 11.500px; }
.al i { width: 5px; height: 7px; border-radius: 50%; display: block; margin-left: 2px; flex: none; }
.f-red { background: #f0324a; }
.f-yel { background: #f5c518; }
.f-min { background: #66d6c4; }
.f-blu { background: #3f6cf0; }
.w76 { width: 76px; }
.w63 { width: 63px; }
.w70 { width: 70px; }
.w75 { width: 75px; }
.fi { height: 24px; display: flex; align-items: center; justify-content: center; flex: none; }
.w28 { width: 28px; }
.w33 { width: 33px; }
.w32 { width: 32px; }
.w25 { width: 25px; }
.f-on { background: #2c8ad6; }
.fdiv { width: 1px; height: 24px; background: #4c9ad8; margin: 0 6px 0 2px; }
.fdiv2 { width: 1px; height: 24px; background: #4c9ad8; margin: 0 2px 0 6px; }
.rca { width: 82px; padding-left: 1px; box-sizing: border-box; color: #cfe3f5; font-size: 11.500px; letter-spacing: -.35px; }
.ffilter { width: 206px; height: 24px; box-sizing: border-box; background: #2c8ad6; border-radius: 3px; display: flex; align-items: center; justify-content: space-between; padding: 0 7px 0 6px; }
.ffilter em { font-size: 11.500px; color: #cfe3f5; }
</style>
